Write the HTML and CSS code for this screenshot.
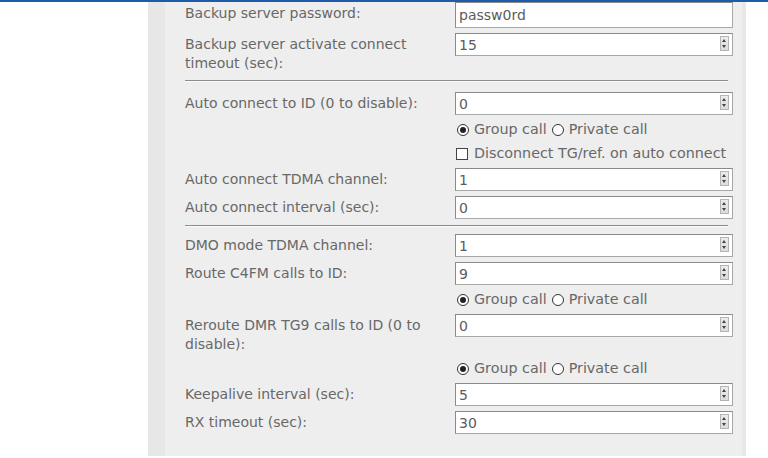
FILE: index.html
```html
<!DOCTYPE html>
<html lang="en">
<head>
<meta charset="UTF-8">
<title>Settings</title>
<link rel="stylesheet" href="styles.css">
</head>
<body>
<div class="topbar"></div>
<div class="panel">
  <form class="settings">
    <div class="row">
      <label class="lbl">Backup server password:</label>
      <div class="field tall">passw0rd</div>
    </div>
    <div class="row">
      <label class="lbl">Backup server activate connect timeout (sec):</label>
      <div class="field">15<span class="spin"></span></div>
    </div>
    <hr class="sep">
    <div class="row">
      <label class="lbl">Auto connect to ID (0 to disable):</label>
      <div class="field">0<span class="spin"></span></div>
    </div>
    <div class="row">
      <span></span>
      <div class="opts"><span class="radio on"></span>Group call<span class="radio gap"></span>Private call</div>
    </div>
    <div class="row">
      <span></span>
      <div class="opts"><span class="check"></span>Disconnect TG/ref. on auto connect</div>
    </div>
    <div class="row">
      <label class="lbl">Auto connect TDMA channel:</label>
      <div class="field">1<span class="spin"></span></div>
    </div>
    <div class="row">
      <label class="lbl">Auto connect interval (sec):</label>
      <div class="field">0<span class="spin"></span></div>
    </div>
    <hr class="sep second">
    <div class="row">
      <label class="lbl">DMO mode TDMA channel:</label>
      <div class="field">1<span class="spin"></span></div>
    </div>
    <div class="row">
      <label class="lbl">Route C4FM calls to ID:</label>
      <div class="field">9<span class="spin"></span></div>
    </div>
    <div class="row">
      <span></span>
      <div class="opts"><span class="radio on"></span>Group call<span class="radio gap"></span>Private call</div>
    </div>
    <div class="row">
      <label class="lbl">Reroute DMR TG9 calls to ID (0 to disable):</label>
      <div class="field">0<span class="spin"></span></div>
    </div>
    <div class="row">
      <span></span>
      <div class="opts"><span class="radio on"></span>Group call<span class="radio gap"></span>Private call</div>
    </div>
    <div class="row">
      <label class="lbl">Keepalive interval (sec):</label>
      <div class="field">5<span class="spin"></span></div>
    </div>
    <div class="row">
      <label class="lbl">RX timeout (sec):</label>
      <div class="field">30<span class="spin"></span></div>
    </div>
  </form>
</div>
</body>
</html>
```
FILE: styles.css
```css
body {
  margin: 0;
  background-color: #fff;
  font-family: "DejaVu Sans", sans-serif;
  font-size: 14px;
  color: #686868;
}
.topbar {
  height: 2px;
  background-color: #1f5ba8;
}
.panel {
  margin-left: 148px;
  width: 557px;
  background-color: #eeeeee;
  border-left: 17px solid #e7e7e7;
  border-right: 4px solid #e8e8e8;
  padding: 0 0 22px 20px;
}
.settings {
  display: flex;
  flex-direction: column;
  gap: 5px;
}
.row {
  display: grid;
  grid-template-columns: 270px 278px;
}
.lbl {
  padding-top: 2px;
  line-height: 19px;
  padding-right: 22px;
}
.field {
  position: relative;
  height: 23px;
  line-height: 22px;
  box-sizing: border-box;
  padding-left: 3px;
  background-color: #fff;
  border: 1px solid #a8a8a8;
  border-top-color: #8a8a8a;
  border-left-color: #8a8a8a;
  color: #5c5c5c;
}
.field.tall {
  height: 26px;
  line-height: 24px;
}
.spin {
  position: absolute;
  right: 3px;
  top: 2px;
  width: 9px;
  height: 15px;
  box-sizing: border-box;
  border: 1px solid #b4b4b4;
  background: linear-gradient(#ececec, #dcdcdc);
}
.spin::before,
.spin::after {
  content: "";
  position: absolute;
  left: 1px;
  border-left: 2.5px solid transparent;
  border-right: 2.5px solid transparent;
}
.spin::before {
  top: 2px;
  border-bottom: 3px solid #444;
}
.spin::after {
  bottom: 2px;
  border-top: 3px solid #444;
}
.opts {
  height: 19px;
  line-height: 19px;
  font-size: 14.3px;
  display: flex;
  align-items: center;
  white-space: nowrap;
}
.radio {
  width: 12px;
  height: 12px;
  box-sizing: border-box;
  border: 1px solid #333;
  border-radius: 50%;
  margin: 0 5px 0 2px;
  background-color: #fff;
  position: relative;
}
.radio.gap {
  margin-left: 5px;
}
.radio.on::after {
  content: "";
  position: absolute;
  left: 2px;
  top: 2px;
  width: 6px;
  height: 6px;
  border-radius: 50%;
  background-color: #222;
}
.check {
  width: 12px;
  height: 12px;
  box-sizing: border-box;
  border: 1px solid #444;
  background-color: #fff;
  margin: 0 6px 0 1px;
}
.sep {
  width: 543px;
  margin: 2px 0 5px;
  border: 0;
  border-top: 1px solid #8c8c8c;
  border-bottom: 1px solid #fafafa;
}
.sep.second {
  margin: 1px 0 2px;
}
```
